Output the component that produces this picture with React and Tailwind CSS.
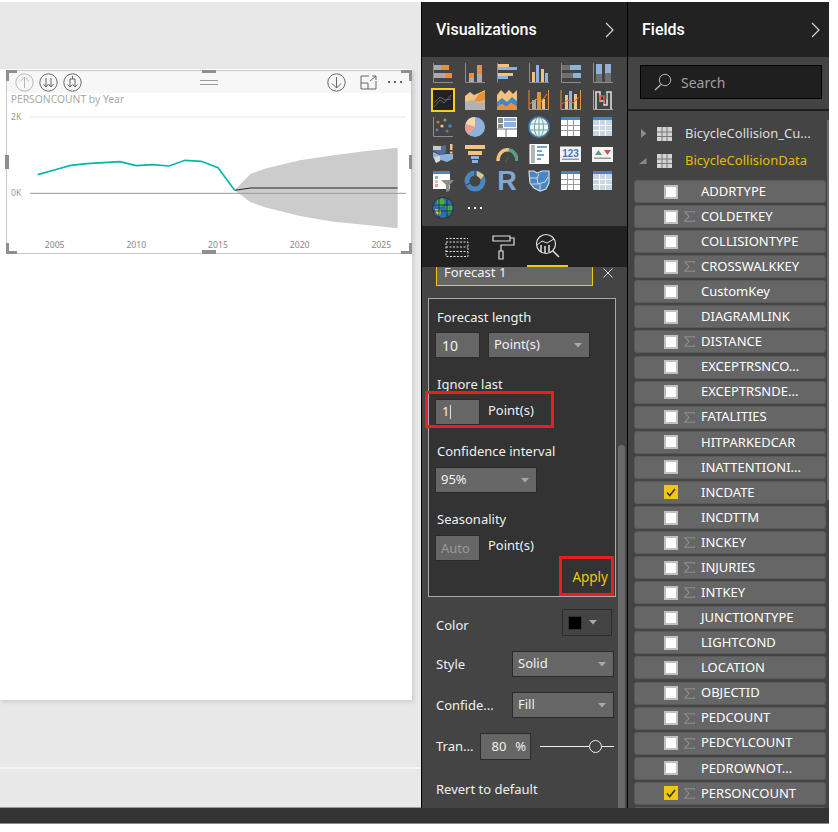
import React from "react";

const O = "#e8913a", G = "#ababab", B = "#8db3dc", T = "#f3c27c", A = "#8d8d8d", D = "#4a86c0", DK = "#6f6f6f";
const R = ({ x, y, w, h, f }) => <rect x={x} y={y} width={w} height={h} fill={f} />;
const Axes = () => <path d="M1.5 1V20.5H21" stroke={A} strokeWidth="1" fill="none" />;
const Ic = ({ children }) => <svg width="22" height="22" viewBox="0 0 22 22">{children}</svg>;
const Tbl = ({ soft }) => (
  <g>
    <R x={1} y={1} w={19} h={19} f={soft ? "#c9d6e4" : "#ffffff"} />
    <R x={1} y={1} w={19} h={3} f="#4f81bd" />
    <path d="M7.5 4V20M13.5 4V20M1 9.5H20M1 14.5H20" stroke={soft ? "#ffffff" : "#9a9a9a"} strokeWidth="1" />
  </g>
);
const icons = [
  <Ic><Axes /><R x={2} y={3} w={7} h={5} f={G} /><R x={9} y={3} w={8} h={5} f={O} /><R x={2} y={11} w={11} h={5} f={G} /><R x={13} y={11} w={7} h={5} f={O} /></Ic>,
  <Ic><Axes /><R x={5} y={11} w={5} h={5} f={O} /><R x={5} y={16} w={5} h={4} f={G} /><R x={13} y={3} w={5} h={9} f={O} /><R x={13} y={12} w={5} h={8} f={G} /></Ic>,
  <Ic><path d="M1.5 1V20.5" stroke={A} /><R x={2} y={2} w={11} h={3} f={T} /><R x={2} y={5} w={19} h={3} f={B} /><R x={2} y={11} w={15} h={3} f={T} /><R x={2} y={14} w={10} h={3} f={B} /></Ic>,
  <Ic><Axes /><R x={4} y={10} w={3} h={10} f={T} /><R x={8} y={3} w={3} h={17} f={B} /><R x={13} y={7} w={3} h={13} f={T} /><R x={17} y={11} w={3} h={9} f={B} /></Ic>,
  <Ic><Axes /><R x={2} y={3} w={8} h={5} f={DK} /><R x={10} y={3} w={11} h={5} f={B} /><R x={2} y={11} w={11} h={5} f={DK} /><R x={13} y={11} w={8} h={5} f={B} /></Ic>,
  <Ic><Axes /><R x={4} y={2} w={6} h={10} f={B} /><R x={4} y={12} w={6} h={8} f={DK} /><R x={13} y={2} w={6} h={9} f={B} /><R x={13} y={11} w={6} h={9} f={DK} /></Ic>,
  <div className="w-[24px] h-[24px] -ml-px -mt-px border-2 border-[#f5cf1a] bg-[#222222]"><svg width="20" height="20" viewBox="0 0 20 20"><path d="M1 17L7 10L11 13L18 5M1 13L7 7L12 10L18 9" stroke="#666666" fill="none" /></svg></div>,
  <Ic><path d="M1 7L6 3L10 6L15 4L21 1V20H1Z" fill={T} /><path d="M10 12L15 5L21 2V11L15 13Z" fill={O} /><path d="M1 13L8 11L14 14L21 12V21H1Z" fill="#b2b2b2" /></Ic>,
  <Ic><path d="M1 6L5 1L9 5L13 1L17 5L21 1V21H1Z" fill={T} /><path d="M1 13L6 9L11 13L16 8L21 12V18L15 14L10 18L6 15L1 18Z" fill={D} /><path d="M1 18L6 15L10 18L15 14L21 18V21H1Z" fill={O} /></Ic>,
  <Ic><path d="M1 1V20.5H21M20.5 1V20" stroke={O} fill="none" /><R x={4} y={11} w={4} h={9} f={G} /><R x={9} y={3} w={4} h={17} f={O} /><R x={14} y={10} w={3} h={10} f={T} /><path d="M2 15L8 10L13 13L19 5" stroke={O} fill="none" /></Ic>,
  <Ic><path d="M1 1V20.5H21M20.5 1V20" stroke={O} fill="none" /><R x={5} y={6} w={3} h={14} f={T} /><R x={9} y={2} w={3} h={18} f={B} /><R x={14} y={5} w={3} h={15} f={T} /><path d="M2 15L8 11L13 14L19 8" stroke="#e8664a" fill="none" /></Ic>,
  <Ic><path d="M1.5 1V20.5H21" stroke={G} fill="none" /><path d="M4 20V3H8V12H12V16H15V3H19V20" stroke="#dddddd" strokeWidth="1.6" fill="none" /><path d="M8 12V7H12V15" stroke="#e0573c" strokeWidth="1.5" fill="none" /><path d="M14.5 4V10" stroke="#5aa58c" strokeWidth="1.5" /></Ic>,
  <Ic><Axes /><circle cx="6" cy="6" r="1.6" fill="#d9634c" /><circle cx="13" cy="4" r="1.5" fill="#7fa66d" /><circle cx="10" cy="10" r="1.6" fill={T} /><circle cx="18" cy="10" r="1.7" fill={D} /><circle cx="15" cy="15" r="1.5" fill="#777777" /><circle cx="5" cy="14" r="1.4" fill={D} /></Ic>,
  <Ic><circle cx="11" cy="11" r="10" fill={B} /><path d="M11 11V1A10 10 0 0 0 1.5 8Z" fill="#f4d9ac" /><path d="M11 11L1.5 8A10 10 0 0 0 5 19Z" fill="#eb9c94" /></Ic>,
  <Ic><R x={1} y={1} w={20} h={20} f="#ffffff" /><R x={2} y={2} w={5} h={5} f="#8a8a8a" /><R x={8} y={2} w={12} h={3} f={B} /><R x={8} y={6} w={12} h={5} f={B} /><R x={2} y={8} w={5} h={4} f="#8a8a8a" /><path d="M1 13H21M10 13V21" stroke="#777777" /></Ic>,
  <Ic><circle cx="11" cy="11" r="10" fill="#eff4f4" stroke="#3d7fb4" strokeWidth="1.6" /><ellipse cx="11" cy="11" rx="4.5" ry="10" fill="none" stroke="#6aa89e" /><path d="M1 8H21M1 14H21M11 1V21" stroke="#6aa89e" /></Ic>,
  <Ic><Tbl /></Ic>,
  <Ic><Tbl soft /></Ic>,
  <Ic><path d="M1 2L7 4L14 2V10L9 12L4 9L1 8Z" fill="#4f6f9c" /><path d="M1 9L8 12L14 11L21 11V16L15 19L9 17L4 20L1 14Z" fill={B} /><path d="M1 3H9V7H1Z" fill="#c9c9c9" /><path d="M2 14L8 13V18L4 20Z" fill="#d8d8d8" /><R x={18} y={1} w={2.5} h={6} f={T} /><R x={18} y={8.5} w={2.5} h={2} f={T} /></Ic>,
  <Ic><R x={1} y={2} w={20} h={4} f={T} /><R x={4} y={8} w={14} h={4} f={T} /><R x={7} y={13} w={8} h={3} f={B} /><R x={8} y={17} w={6} h={3} f={B} /></Ic>,
  <Ic><path d="M2 18A9 11 0 0 1 13 7" stroke={T} strokeWidth="3.5" fill="none" /><path d="M13 7A9 11 0 0 1 21 18" stroke="#5f9c85" strokeWidth="3.5" fill="none" /><path d="M9 19L13 14" stroke="#555555" strokeWidth="1.5" /></Ic>,
  <Ic><R x={1} y={1} w={20} h={20} f="#ffffff" /><R x={1} y={1} w={1} h={20} f="#aaaaaa" /><R x={3} y={2} w={4} h={18} f="#b5b5b5" /><path d="M9 4H19M9 8H14M9 12H16M9 16H13" stroke={D} strokeWidth="1.6" /></Ic>,
  <Ic><R x={0} y={3} w={21} h={16} f="#f4f4f4" /><R x={0} y={3} w={21} h={1} f="#999999" /><text x="10.5" y="13.5" textAnchor="middle" fontSize="10" fontWeight="700" fill="#3f78b4" fontFamily="Liberation Sans">123</text><R x={2} y={15.5} w={17} h={1.5} f="#999999" /></Ic>,
  <Ic><R x={0} y={4} w={21} h={15} f="#f4f4f4" /><path d="M3 12L6.5 7L10 12Z" fill="#5a9c85" /><path d="M12 7H19L15.5 12Z" fill="#d9534f" /><R x={2} y={14.5} w={17} h={1.5} f="#999999" /></Ic>,
  <Ic><R x={1} y={1} w={17} h={18} f="#ffffff" /><R x={1} y={1} w={17} h={3} f="#4f81bd" /><R x={3} y={6} w={3} h={3} f={B} /><R x={3} y={10} w={3} h={3} f={T} /><R x={3} y={14} w={3} h={3} f="#eb9c94" /><path d="M9 10H22L17.5 15V21L14 22V15Z" fill="#8d8d8d" /></Ic>,
  <Ic><circle cx="11" cy="11" r="8" fill="none" stroke={D} strokeWidth="5" /><path d="M13 1L20 5L17 9L13 6Z" fill={T} /><path d="M11 0.5V6" stroke="#444444" strokeWidth="1.2" /><path d="M2 15L6.5 13" stroke="#444444" strokeWidth="1.2" /></Ic>,
  <div className="w-[22px] h-[22px] flex items-center justify-center text-[27px] leading-none font-bold text-[#7fa8d3] font-['Liberation_Sans',sans-serif]">R</div>,
  <Ic><path d="M1 1H6L9 3L14 1H21V13L18 19L12 21L6 18L2 13Z" fill={D} stroke="#cfdbe8" strokeWidth="1.2" /><path d="M1 8L9 8L11 4M9 8L10 14L4 14M10 14L17 12L20 7M12 14L12 20" stroke="#cfdbe8" fill="none" /></Ic>,
  <Ic><Tbl /></Ic>,
  <Ic><Tbl soft /></Ic>,
  <Ic><circle cx="11" cy="11" r="10.5" fill="#2d6fa8" stroke="#333333" /><path d="M5 3L11 1L13 6L9 10L5 9Z" fill="#4fae3e" /><path d="M13 9L20 7L20 14L15 17Z" fill="#46a63a" /><path d="M3 12L9 13L8 19L4 16Z" fill="#e3cc3a" /><path d="M1 8H21M1 14H21M7 1V21M15 1V21" stroke="#0d2a4a" strokeWidth="0.8" /></Ic>,
  <div className="w-[22px] h-[22px] flex items-center justify-center gap-[4px]"><span className="w-[2px] h-[2px] bg-white" /><span className="w-[2px] h-[2px] bg-white" /><span className="w-[2px] h-[2px] bg-white" /></div>,
];

const Caret = () => <svg width="8" height="5" viewBox="0 0 8 5" className="shrink-0"><path d="M0 0H8L4 4.5Z" fill="#a8a8a8" /></svg>;
const Select = ({ w, label, cls = "" }) => (
  <div className={`h-[26px] bg-[#666666] border border-[#2b2b2b] flex items-center justify-between pl-[5px] pr-[7px] text-[#f0f0f0] ${cls}`} style={{ width: w }}>
    <span>{label}</span><Caret />
  </div>
);
const Input = ({ children, cls = "" }) => <div className={`w-[45px] h-[26px] bg-[#666666] border border-[#2b2b2b] flex items-center pl-[6px] ${cls}`}>{children}</div>;

const fields = [
  ["ADDRTYPE", 0, 0], ["COLDETKEY", 1, 0], ["COLLISIONTYPE", 0, 0], ["CROSSWALKKEY", 1, 0], ["CustomKey", 0, 0], ["DIAGRAMLINK", 0, 0],
  ["DISTANCE", 1, 0], ["EXCEPTRSNCO...", 0, 0], ["EXCEPTRSNDE...", 0, 0], ["FATALITIES", 1, 0], ["HITPARKEDCAR", 0, 0], ["INATTENTIONI...", 0, 0],
  ["INCDATE", 0, 1], ["INCDTTM", 0, 0], ["INCKEY", 1, 0], ["INJURIES", 1, 0], ["INTKEY", 1, 0], ["JUNCTIONTYPE", 0, 0], ["LIGHTCOND", 0, 0],
  ["LOCATION", 0, 0], ["OBJECTID", 1, 0], ["PEDCOUNT", 1, 0], ["PEDCYLCOUNT", 1, 0], ["PEDROWNOT...", 0, 0], ["PERSONCOUNT", 1, 1],
];

const Chevron = () => <svg width="9" height="16" viewBox="0 0 9 16"><path d="M1 1L8 8L1 15" stroke="#d5d5d5" strokeWidth="1.2" fill="none" /></svg>;
const TblIcon = () => <svg width="15" height="14" viewBox="0 0 15 14" className="shrink-0"><rect width="15" height="14" fill="#d4d4d4" /><path d="M5 0V14M10 0V14M0 5H15M0 9.5H15" stroke="#777777" /></svg>;
const Handle = ({ cls }) => <div className={`absolute bg-[#8f8f8f] ${cls}`} />;
const Corner = ({ cls }) => <div className={`absolute w-[11px] h-[11px] ${cls}`} />;
const Circ = ({ children, c = "#666666" }) => (
  <svg width="19" height="19" viewBox="0 0 19 19"><circle cx="9.5" cy="9.5" r="8.7" fill="none" stroke={c} />{children}</svg>
);

export default function App() {
  return (
    <div className="w-[838px] h-[832px] bg-white pt-[2px] overflow-hidden font-['Noto_Sans',sans-serif] text-[13px]">
      <div className="w-[829px] h-[806px] flex">
        <div className="w-[421px] h-full bg-[#e8e8e8] pt-[67px] flex flex-col border-b border-[#999999]">
          <div className="w-[412px] h-[631px] bg-white shadow-[2px_2px_4px_rgba(0,0,0,0.12)] pt-px shrink-0">
            <div className="relative ml-[6px] w-[406px] h-[184px] border border-[#c9c9c9] bg-white">
              <div className="h-[22px] bg-[#f7f7f7] flex items-center pl-[8px] pr-[6px]">
                <div className="flex items-center gap-[5px]">
                  <Circ c="#b5b5b5"><path d="M9.5 15V4M5 8.5L9.5 4L14 8.5" stroke="#b5b5b5" fill="none" /></Circ>
                  <Circ><path d="M7 5V14M12 5V14M4.5 11L7 14L9.5 11M9.5 11L12 14L14.5 11" stroke="#666666" fill="none" /></Circ>
                  <Circ><path d="M7 14V6H12V14M4.5 11.5L7 14L9.5 11.5M9.5 11.5L12 14L14.5 11.5M9.5 3V6" stroke="#666666" fill="none" /></Circ>
                </div>
                <div className="ml-[118px] w-[18px] flex flex-col gap-[3px]"><div className="h-px bg-[#999999]" /><div className="h-px bg-[#999999]" /></div>
                <div className="ml-auto flex items-center">
                  <Circ><path d="M9.5 4V15M5 10.5L9.5 15L14 10.5" stroke="#666666" fill="none" /></Circ>
                  <svg width="17" height="15" viewBox="0 0 17 15" className="ml-[14px]"><path d="M9 1H1V14H16V6M1 8H8V14M10 6L16 1M12 1H16V5" stroke="#666666" fill="none" /></svg>
                  <div className="ml-[11px] flex gap-[4px] w-[17px]"><span className="w-[2px] h-[2px] bg-[#666666]" /><span className="w-[2px] h-[2px] bg-[#666666]" /><span className="w-[2px] h-[2px] bg-[#666666]" /></div>
                </div>
              </div>
              <svg width="404" height="160" viewBox="21 96 1212 480" className="block">
                <text x="32" y="127" fontSize="31" fill="#aaaaaa">PERSONCOUNT by Year</text>
                <text x="33" y="177" fontSize="26" fill="#999999">2K</text>
                <text x="33" y="406" fontSize="26" fill="#999999">0K</text>
                <path d="M90 168H1218" stroke="#e6e6e6" strokeWidth="3" />
                <path d="M704 388L752 338L800 322L850 310L900 298L1000 283L1100 270L1193 260V502L1100 492L1000 482L900 465L800 440L752 424Z" fill="#cccccc" />
                <path d="M90 397H1218" stroke="#999999" strokeWidth="3" />
                <path d="M704 388L752 381H1193" stroke="#222222" strokeWidth="3" fill="none" />
                <path d="M113 341L163 327L212 313L260 308L310 305L360 302L408 314L457 311L507 315L555 298L604 301L654 320L704 388" stroke="#01b8aa" strokeWidth="5" fill="none" />
                {[["2005", 164], ["2010", 409], ["2015", 654], ["2020", 899], ["2025", 1144]].map(([t, x]) => (
                  <text key={t} x={x} y="562" fontSize="26" fill="#888888" textAnchor="middle">{t}</text>
                ))}
              </svg>
              <Corner cls="-left-px -top-px border-l-[3px] border-t-[3px] border-[#8f8f8f]" />
              <Corner cls="-right-px -top-px border-r-[3px] border-t-[3px] border-[#8f8f8f]" />
              <Corner cls="-left-px -bottom-px border-l-[3px] border-b-[3px] border-[#8f8f8f]" />
              <Corner cls="-right-px -bottom-px border-r-[3px] border-b-[3px] border-[#8f8f8f]" />
              <Handle cls="left-[195px] -top-[1px] w-[14px] h-[3px]" />
              <Handle cls="left-[195px] -bottom-[1px] w-[14px] h-[4px]" />
              <Handle cls="-left-[2px] top-[84px] w-[4px] h-[14px]" />
              <Handle cls="-right-[1px] top-[84px] w-[3px] h-[14px]" />
            </div>
          </div>
          <div className="mt-[67px] h-[2px] bg-[#f5f5f5] shrink-0" />
        </div>

        <div className="w-[206px] h-full flex flex-col border-l border-black bg-[#444444] shrink-0">
          <div className="h-[55px] bg-[#222222] flex items-center justify-between pl-[14px] pr-[13px] shrink-0">
            <span className="text-white text-[16px] font-['Roboto',sans-serif] font-medium">Visualizations</span>
            <Chevron />
          </div>
          <div className="h-[169px] pt-[5px] pl-[10px] grid grid-cols-[repeat(6,32px)] auto-rows-[27px] shrink-0">
            {icons.map((ic, i) => <div key={i}>{ic}</div>)}
          </div>
          <div className="h-[41px] bg-[#222222] flex items-end pl-[23px] shrink-0">
            <div className="w-[35px] h-[41px] flex items-center"><svg width="24" height="24" viewBox="0 0 24 24"><path d="M1 3.5H23M1 7H23V21.5H1ZM1 12H23M1 16.5H23" stroke="#e0e0e0" strokeDasharray="2 1.5" fill="none" /></svg></div>
            <div className="w-[35px] h-[41px] ml-[11px] -mr-[6px] flex items-center"><svg width="24" height="26" viewBox="0 0 24 26"><path d="M2 2H19V7H2ZM19 4H23V11H10V17M8 17H12V25H8Z" stroke="#e0e0e0" strokeWidth="1.2" fill="none" /></svg></div>
            <div className="w-[41px] h-[41px] border-b-2 border-[#f2c80f] ml-[7px] flex items-center justify-center"><svg width="25" height="25" viewBox="0 0 25 25"><circle cx="11" cy="11" r="9.5" stroke="#e0e0e0" strokeWidth="1.2" fill="none" /><path d="M18 18L24 24" stroke="#e0e0e0" strokeWidth="1.5" /><path d="M2 12L7 8L12 10L19 6" stroke="#e0e0e0" fill="none" /><path d="M6 12V19M10 13V20M14 12V19" stroke="#e0e0e0" strokeWidth="1.5" /></svg></div>
          </div>
          <div className="relative flex-1 min-h-0 overflow-hidden text-[#f0f0f0]">
            <div className="absolute right-[2px] top-[178px] bottom-0 w-[7px] bg-[#6a6a6a] rounded-t-[3px]" />
            <div className="flex items-start pl-[14px]">
              <div className="w-[157px] h-[19px] bg-[#666666] border-x border-b border-[#f2c80f] pl-[7px] pb-[7px] flex items-center leading-none">Forecast 1</div>
              <svg width="10" height="10" viewBox="0 0 10 10" className="ml-[10px] mt-[1px]"><path d="M0.5 0.5L9.5 9.5M9.5 0.5L0.5 9.5" stroke="#dddddd" /></svg>
            </div>
            <div className="relative ml-[6px] mt-[12px] w-[188px] h-[299px] bg-[#333333] border border-[#a9a9a9] pl-[6px] pt-[8px]">
              <div className="pl-[2px] leading-[20px]">Forecast length</div>
              <div className="flex gap-[8px] mt-[5px]"><Input><span className="text-[14px]">10</span></Input><Select w="102px" label="Point(s)" /></div>
              <div className="pl-[2px] mt-[16px] leading-[20px]">Ignore last</div>
              <div className="flex gap-[8px] mt-[5px]"><Input><span className="text-[13px]">1</span><span className="w-px h-[14px] bg-[#dddddd] ml-[1px]" /></Input><span className="mt-[2px]">Point(s)</span></div>
              <div className="pl-[2px] mt-[16px] leading-[20px]">Confidence interval</div>
              <div className="mt-[6px]"><Select w="102px" label="95%" /></div>
              <div className="pl-[2px] mt-[16px] leading-[20px]">Seasonality</div>
              <div className="flex gap-[8px] mt-[6px]"><Input cls="!pl-[5px] text-[#999999]"><span className="mt-[2px]">Auto</span></Input><span className="mt-[1px]">Point(s)</span></div>
              <div className="absolute right-[7px] top-[268px] text-[#f2c80f] text-[13.5px] leading-[20px]">Apply</div>
              <div className="absolute -left-[4px] top-[92px] w-[129px] h-[37px] border-[3px] border-[#ed1c24]" />
              <div className="absolute left-[130px] top-[257px] w-[55px] h-[40px] border-[3px] border-[#ed1c24]" />
            </div>
            <div className="pl-[14px] pr-[13px] mt-[12px]">
              <div className="flex items-start justify-between h-[27px]">
                <span className="mt-[7px]">Color</span>
                <div className="w-[50px] h-[27px] border border-[#2c2c2c] flex items-center pl-[5px] gap-[7px] mr-[2px]"><div className="w-[14px] h-[14px] bg-black border border-[#333333]" /><Caret /></div>
              </div>
              <div className="flex items-center justify-between mt-[15px]"><span className="mt-[2px]">Style</span><Select w="102px" label="Solid" /></div>
              <div className="flex items-center justify-between mt-[15px]"><span className="mt-[2px]">Confide...</span><Select w="102px" label="Fill" /></div>
              <div className="flex items-center mt-[15px]">
                <span>Tran...</span>
                <div className="ml-[7px] w-[51px] h-[27px] bg-[#666666] border border-[#2b2b2b] flex items-center pl-[10px] gap-[9px] shrink-0"><span>80</span><span>%</span></div>
                <div className="ml-[9px] relative w-[75px] h-px bg-[#eeeeee]"><div className="absolute left-[49px] -top-[6px] w-[13px] h-[13px] rounded-full bg-[#444444] border border-[#eeeeee]" /></div>
              </div>
              <div className="mt-[19px] leading-[20px]">Revert to default</div>
            </div>
          </div>
        </div>

        <div className="flex-1 h-full flex flex-col border-l border-black bg-[#444444]">
          <div className="h-[55px] bg-[#222222] flex items-center justify-between pl-[14px] pr-[9px] shrink-0">
            <span className="text-white text-[16px] font-['Roboto',sans-serif] font-medium">Fields</span>
            <Chevron />
          </div>
          <div className="h-[54px] border-b-[2px] border-[#1e1e1e] pt-[8px] pl-[12px] shrink-0">
            <div className="w-[182px] h-[34px] bg-[#1f1f1f] border border-black flex items-center pl-[13px] gap-[9px] text-[#a0a0a0] text-[14px]">
              <svg width="18" height="18" viewBox="0 0 18 18"><circle cx="11" cy="7" r="5.7" stroke="#b5b5b5" fill="none" /><path d="M7 11.5L1 17" stroke="#b5b5b5" strokeWidth="1.3" /></svg>
              <span>Search</span>
            </div>
          </div>
          <div className="relative flex-1 min-h-0 overflow-hidden pl-[6px]">
            <div className="absolute right-0 top-[9px] h-[380px] w-[2px] bg-[#6a6a6a]" />
            <div className="h-[69px] pt-[9px] text-[#dddddd] text-[13px]">
              <div className="h-[27px] flex items-center pl-[7px]">
                <svg width="6" height="9" viewBox="0 0 6 9"><path d="M0 0L5.5 4.5L0 9Z" fill="#8a8a8a" /></svg>
                <div className="ml-[10px] mr-[13px] flex"><TblIcon /></div><span>BicycleCollision_Cu...</span>
              </div>
              <div className="h-[27px] flex items-center pl-[5px] text-[#e8b90c]">
                <svg width="8" height="6" viewBox="0 0 8 6"><path d="M7.5 0V6H0Z" fill="#8a8a8a" /></svg>
                <div className="ml-[10px] mr-[13px] flex"><TblIcon /></div><span>BicycleCollisionData</span>
              </div>
            </div>
            <div className="flex flex-col gap-[2.08px]">
              {fields.map(([n, s, c]) => (
                <div key={n} className="w-[192px] h-[23px] shrink-0 bg-[#666666] border border-[#5a5a5a] rounded-[3px] flex items-center pl-[29px] text-white text-[13px]">
                  {c ? (
                    <div className="w-[14px] h-[14px] bg-[#f2c80f] flex items-center justify-center shrink-0"><svg width="10" height="9" viewBox="0 0 10 9"><path d="M1 4.5L3.8 7.5L9 1" stroke="#333333" strokeWidth="1.6" fill="none" /></svg></div>
                  ) : (
                    <div className="w-[14px] h-[14px] bg-white border-2 border-[#c0c0c0] shrink-0" />
                  )}
                  <div className="w-[23px] pl-[6px] shrink-0">{s ? <svg width="11" height="11" viewBox="0 0 11 11"><path d="M10.5 2V0.7H0.7L5 5.5L0.7 10.3H10.5V9" stroke="#8f8f8f" strokeWidth="1.1" fill="none" /></svg> : null}</div>
                  <span className="whitespace-nowrap">{n}</span>
                </div>
              ))}
              <div className="w-[192px] h-[23px] shrink-0 bg-[#666666] border border-[#5a5a5a] rounded-[3px]" />
            </div>
          </div>
        </div>
      </div>
      <div className="w-[829px] h-[16px] bg-[#333333] border-b border-[#8a8a8a]" />
    </div>
  );
}
